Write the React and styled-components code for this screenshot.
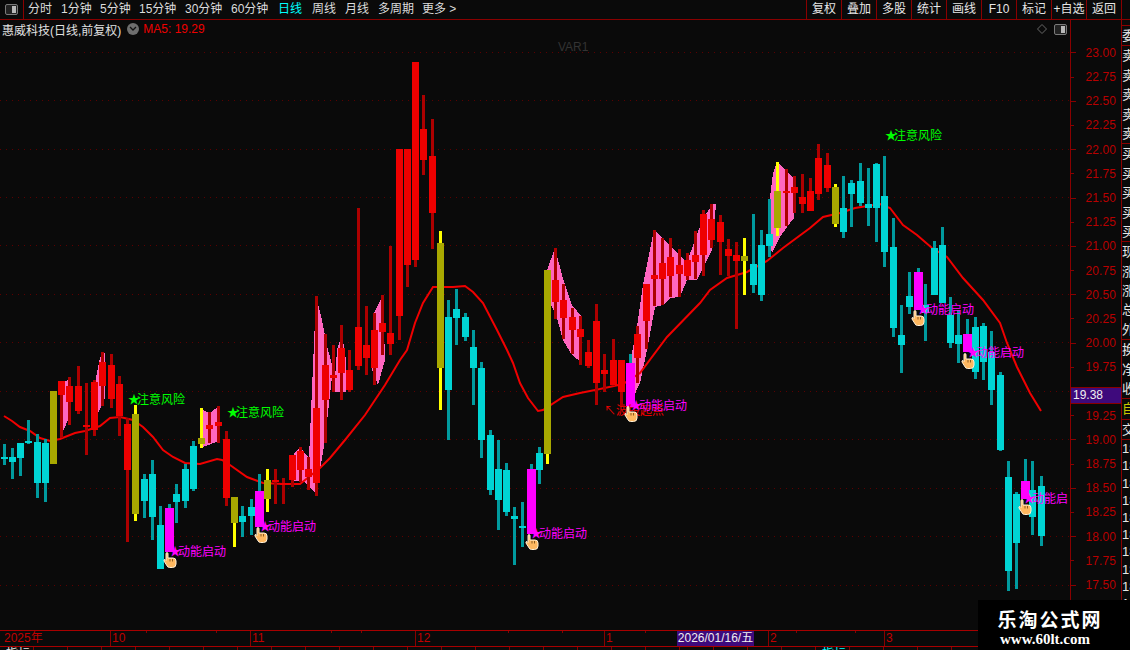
import React from "react";
import styled, { createGlobalStyle } from "styled-components";

const FONT = `"Liberation Sans", "Noto Sans CJK SC", sans-serif`;
const LINE = "#8a0000";

const GlobalStyle = createGlobalStyle`
  html, body { margin: 0; padding: 0; background: #0a0a0a; }
  * { box-sizing: border-box; }
`;

// chart data, in page pixels: [x, wickTop, wickBottom, bodyTop, bodyBottom, kind]
const CANDLES = [
  [4.5, 444, 465, 457, 459, "c"], [12.5, 448, 479, 457, 462, "c"], [20.5, 443, 476, 443, 458, "c"], [28.5, 420, 444, 441, 443, "c"],
  [37.5, 434, 498, 442, 483, "c"], [45.5, 439, 502, 443, 483, "c"], [53.5, 391, 464, 391, 464, "o"], [61.5, 381, 438, 381, 395, "r"],
  [69.5, 377, 425, 386, 402, "r"], [78.5, 366, 414, 386, 411, "r"], [86.5, 383, 455, 425, 427, "r"], [94.5, 380, 436, 382, 430, "r"],
  [102.5, 352, 406, 362, 386, "r"], [111, 354, 408, 365, 399, "r"], [119.5, 376, 436, 384, 416, "r"], [127.5, 418, 542, 424, 470, "r"],
  [135.5, 405, 521, 414, 514, "o"], [144.5, 474, 518, 479, 501, "c"], [152.5, 460, 540, 474, 517, "c"], [160.5, 506, 569, 525, 569, "c"],
  [169, 504, 552, 508, 552, "m"], [176.5, 484, 523, 494, 502, "c"], [185.5, 464, 508, 469, 501, "c"], [193.5, 441, 491, 446, 489, "c"],
  [201.5, 408, 448, 438, 444, "o"], [209.5, 412, 443, 425, 429, "r"], [218.5, 406, 443, 422, 426, "r"], [226.5, 431, 506, 439, 498, "r"],
  [234.5, 497, 547, 497, 523, "o"], [242.5, 506, 537, 516, 522, "c"], [251.5, 499, 535, 507, 516, "c"], [259.5, 474, 527, 491, 527, "m"],
  [267.5, 469, 512, 480, 499, "o"], [275.5, 469, 504, 480, 482, "r"], [283.5, 478, 504, 483, 485, "r"], [292.5, 455, 487, 455, 480, "r"],
  [300.5, 447, 482, 451, 470, "r"], [308.5, 457, 490, 469, 477, "r"], [316.5, 296, 496, 408, 483, "r"], [325.5, 334, 443, 365, 400, "r"],
  [333.5, 345, 392, 375, 378, "r"], [341.5, 325, 400, 348, 373, "r"], [349.5, 350, 392, 370, 390, "r"], [358.5, 208, 370, 327, 366, "r"],
  [366.5, 306, 375, 345, 358, "r"], [374.5, 313, 385, 330, 368, "r"], [382.5, 295, 355, 323, 332, "r"], [390.5, 246, 355, 333, 344, "r"],
  [399, 149, 340, 149, 316, "r"], [407.5, 149, 287, 149, 265, "r"], [415.5, 62, 267, 62, 260, "r"], [423.5, 95, 175, 129, 160, "r"],
  [432, 119, 249, 156, 213, "r"], [440.5, 231, 410, 243, 368, "o"], [448.5, 300, 440, 317, 390, "c"], [456.5, 289, 345, 309, 318, "c"],
  [465.5, 313, 341, 317, 337, "c"], [473.5, 330, 405, 347, 368, "c"], [481.5, 362, 458, 368, 440, "c"], [490, 430, 495, 435, 490, "c"],
  [498, 440, 530, 469, 500, "c"], [506.5, 463, 516, 470, 512, "c"], [514.5, 507, 565, 516, 519, "c"], [522.5, 502, 547, 526, 527, "c"],
  [531, 464, 534, 469, 534, "m"], [539.5, 447, 484, 453, 470, "c"], [547.5, 270, 464, 270, 454, "o"], [555.5, 248, 319, 280, 302, "r"],
  [563.5, 284, 339, 300, 318, "r"], [572, 308, 354, 317, 330, "r"], [580.5, 316, 365, 329, 337, "r"], [588.5, 340, 368, 352, 366, "r"],
  [596.5, 304, 405, 321, 383, "r"], [604.5, 354, 392, 370, 374, "r"], [613, 339, 386, 360, 385, "r"], [621.5, 360, 407, 360, 392, "r"],
  [630, 354, 407, 363, 407, "m"], [637.5, 326, 383, 334, 358, "r"], [646.5, 284, 349, 284, 321, "r"], [654.5, 230, 306, 275, 279, "r"],
  [662.5, 238, 305, 263, 279, "r"], [670.5, 238, 297, 257, 276, "r"], [679.5, 249, 297, 265, 274, "r"], [687.5, 253, 280, 260, 276, "r"],
  [695.5, 231, 279, 255, 262, "r"], [703.5, 210, 276, 214, 255, "r"], [711.5, 204, 248, 219, 240, "r"], [720.5, 215, 275, 222, 242, "r"],
  [728.5, 239, 276, 249, 256, "r"], [736.5, 242, 329, 255, 261, "r"], [744.5, 238, 295, 256, 261, "o"], [753.5, 214, 293, 264, 285, "c"],
  [761.5, 230, 301, 245, 295, "c"], [769.5, 199, 257, 234, 246, "c"], [777.5, 162, 236, 191, 228, "o"], [786.5, 169, 226, 191, 193, "r"],
  [794.5, 176, 213, 187, 193, "r"], [802.5, 174, 213, 197, 204, "r"], [810.5, 178, 211, 191, 211, "r"], [818.5, 144, 200, 158, 194, "r"],
  [827.5, 153, 192, 165, 188, "r"], [835.5, 184, 227, 187, 224, "o"], [843.5, 176, 238, 208, 232, "c"], [851.5, 180, 227, 183, 194, "c"],
  [860.5, 163, 206, 181, 203, "c"], [868.5, 168, 226, 204, 208, "c"], [876.5, 163, 242, 164, 208, "c"], [884.5, 156, 267, 196, 252, "c"],
  [893.5, 218, 337, 247, 328, "c"], [901.5, 305, 373, 335, 345, "c"], [909.5, 272, 314, 296, 307, "c"], [918, 268, 310, 272, 310, "m"],
  [925.5, 284, 341, 305, 313, "c"], [934.5, 241, 295, 248, 295, "c"], [942.5, 227, 303, 245, 303, "c"], [950.5, 297, 348, 315, 343, "c"],
  [958.5, 310, 363, 335, 344, "c"], [967.5, 319, 352, 334, 352, "m"], [975.5, 317, 379, 327, 372, "c"], [983.5, 323, 380, 326, 362, "c"],
  [991.5, 331, 405, 352, 390, "c"], [1000.5, 372, 451, 375, 450, "c"], [1008.5, 461, 591, 477, 571, "c"], [1016.5, 492, 589, 494, 543, "c"],
  [1025, 459, 499, 481, 499, "m"], [1032.5, 461, 535, 490, 517, "c"], [1041.5, 476, 546, 486, 536, "c"],
];

const COLORS = {
  r: { body: "#ee0000", wick: "#ad0000" },
  c: { body: "#00d4d4", wick: "#009a9e" },
  o: { body: "#a8a800", wick: "#ffff00" },
  m: { body: "#ff00ff", wick: "#009a9e" },
};

const MA_LINE = [
  [4, 416], [12, 421], [20, 427], [30, 431], [40, 438], [50, 441], [60, 439], [75, 433], [85, 431], [100, 426], [110, 418], [120, 417],
  [133, 420], [143, 427], [153, 437], [163, 450], [173, 457], [185, 463], [200, 464], [217, 459], [222, 460], [230, 465], [247, 477],
  [263, 483], [283, 484], [300, 484], [320, 468], [330, 458], [345, 440], [365, 415], [385, 385], [400, 360], [407, 350], [415, 323],
  [423, 303], [433, 287], [453, 287], [465, 286], [473, 292], [483, 303], [497, 330], [507, 350], [513, 363], [520, 383], [528, 398],
  [538, 411], [543, 410], [563, 397], [580, 393], [600, 389], [623, 384], [640, 373], [667, 337], [700, 303], [710, 290], [727, 278],
  [747, 272], [767, 261], [783, 248], [810, 228], [823, 217], [840, 213], [855, 208], [880, 204], [890, 208], [903, 225], [917, 235],
  [932, 248], [947, 257], [963, 278], [983, 300], [1000, 323], [1007, 343], [1017, 367], [1030, 393], [1041, 411],
];

const PINK_AREAS = [
  "60,438 62,384 70,378 72,400 68,420",
  "95,420 95,382 100,358 105,352 105,398",
  "203,447 203,410 210,413 219,406 219,441",
  "289,480 289,460 300,447 309,458 316,296 322,320 328,350 333,368 325,440 316,494 305,482",
  "334,392 337,350 342,335 346,360 346,392",
  "372,370 374,313 383,295 385,360 378,385",
  "547,270 555,248 562,275 572,305 582,317 582,363 572,355 563,340 557,318 549,300",
  "632,400 630,363 637,327 643,285 654,230 662,238 687,263 687,280 680,297 670,298 663,305 655,307 647,350 640,383",
  "687,262 703,218 713,204 716,204 712,250 697,280 687,280",
  "772,253 768,233 770,197 773,173 777,162 793,177 794,218 787,227 780,237",
];

const GRID_YS = [52, 100, 149, 197, 245, 294, 342, 391, 439, 488, 536, 585];

const WARNINGS = [[128, 404], [227, 417], [885, 140]];
const SIGNALS = [
  [169, 556, "动能启动"], [259, 531, "动能启动"], [530, 538, "动能启动"], [630, 410, "动能启动"],
  [917, 314, "动能启动"], [967, 357, "动能启动"], [1023, 503, "动能启"],
];
const HANDS = [[170, 560], [261, 535], [532, 542], [631, 414], [918, 318], [968, 361], [1025, 507]];

const PRICES = [
  "23.00", "22.75", "22.50", "22.25", "22.00", "21.75", "21.50", "21.25", "21.00", "20.75", "20.50", "20.25",
  "20.00", "19.75", "", "19.25", "19.00", "18.75", "18.50", "18.25", "18.00", "17.75", "17.50",
];

const LEFT_TABS = [
  ["分时", 33], ["1分钟", 39], ["5分钟", 39], ["15分钟", 46], ["30分钟", 46], ["60分钟", 47],
  ["日线", 34, true], ["周线", 33], ["月线", 33], ["多周期", 44], ["更多 >", 40],
];
const RIGHT_BUTTONS = ["复权", "叠加", "多股", "统计", "画线", "F10", "标记", "+自选", "返回"];

const SIDE_GROUPS = [
  { rows: ["委比"] },
  { rows: ["卖五", "卖四", "卖三", "卖二", "卖一"] },
  { rows: ["买一", "买二", "买三", "买四", "买五"] },
  { rows: ["现手", "涨跌", "涨幅", "总手", "外盘"] },
  { rows: ["换手", "净资", "收益"] },
  { rows: ["自"], accent: true },
  { rows: ["交"] },
];
const SIDE_NUMBERS = ["18.50", "18.49", "18.48", "18.47", "18.46", "18.45", "18.44", "18.43", "18.42", "18.41", "18.40"];

const MONTHS = [
  ["2025年", 110], ["10", 140], ["11", 165], ["12", 189], ["1", 73],
];
const MINOR_TICKS = [146, 216, 331, 361, 508, 562, 645, 796, 855];

const Page = styled.div`
  position: relative;
  width: 1130px;
  height: 650px;
  overflow: hidden;
  background: #0a0a0a;
  font-family: ${FONT};
  color: #e0e0e0;
`;

const Toolbar = styled.div`
  display: flex;
  align-items: center;
  height: 20px;
  border-bottom: 1px solid ${LINE};
`;

const PanelToggle = styled.div`
  display: flex;
  align-items: center;
  justify-content: center;
  width: 24px;
  height: 19px;
  border-right: 1px solid ${LINE};
  margin-right: 4px;
`;

const Tab = styled.div`
  width: ${(p) => p.$w}px;
  font-size: 12px;
  line-height: 19px;
  white-space: nowrap;
  color: ${(p) => (p.$active ? "#00ffff" : "#dcdcdc")};
`;

const ToolbarRight = styled.div`
  display: flex;
  margin-left: auto;
  margin-right: 8px;
  border-left: 1px solid ${LINE};
`;

const ToolButton = styled.div`
  width: 35px;
  height: 19px;
  border-right: 1px solid ${LINE};
  font-size: 12px;
  line-height: 19px;
  text-align: center;
  white-space: nowrap;
  color: #e6e6e6;
`;

const Main = styled.div`
  display: flex;
  height: 610px;
`;

const ChartPanel = styled.div`
  display: flex;
  flex-direction: column;
  width: 1070px;
`;

const InfoRow = styled.div`
  display: flex;
  align-items: center;
  height: 18px;
  padding: 0 3px 0 2px;
  font-size: 12px;
`;

const StockName = styled.span`
  color: #e0e0e0;
  white-space: nowrap;
`;

const MaValue = styled.span`
  margin-left: 4px;
  color: #ee0000;
  white-space: nowrap;
`;

const RoundButton = styled.span`
  display: flex;
  align-items: center;
  justify-content: center;
  width: 12px;
  height: 12px;
  margin-left: 6px;
  border-radius: 50%;
  background: #6e6e6e;
`;

const InfoTools = styled.div`
  display: flex;
  align-items: center;
  gap: 7px;
  margin-left: auto;
`;

const Plot = styled.svg`
  display: block;
  width: 1070px;
  height: 592px;
`;

const ChartText = styled.text`
  font-family: ${FONT};
  font-size: 12px;
  fill: ${(p) => p.$color};
`;

const Star = styled.tspan`
  letter-spacing: -3px;
`;

const PriceAxis = styled.div`
  width: 52px;
  padding-top: 20.8px;
  border-left: 1px solid ${LINE};
  border-right: 1px solid ${LINE};
`;

const PriceRow = styled.div`
  display: flex;
  align-items: center;
  justify-content: space-between;
  height: 24.2px;
  padding-right: 5px;
`;

const PriceTick = styled.span`
  width: ${(p) => (p.$major ? 5 : 3)}px;
  height: 1px;
  background: ${LINE};
`;

const PriceText = styled.span`
  font-size: 12px;
  letter-spacing: 0.1px;
  color: #b80000;
`;

const PriceTag = styled.div`
  position: absolute;
  left: 1070px;
  top: 387px;
  width: 52px;
  height: 17px;
  padding-left: 2px;
  background: #3e0a7c;
  border: 1px solid ${LINE};
  font-size: 12px;
  line-height: 15px;
  color: #f0f0f0;
`;

const SideStrip = styled.div`
  width: 8px;
  padding-top: 5px;
  overflow: hidden;
  white-space: nowrap;
`;

const SideGroup = styled.div`
  border-top: 1px solid ${LINE};
  font-size: 13px;
  color: ${(p) => (p.$accent ? "#c8c800" : "#e6e6e6")};
`;

const SideCell = styled.div`
  height: ${(p) => p.$h}px;
  line-height: ${(p) => p.$h}px;
`;

const DateAxis = styled.div`
  position: relative;
  display: flex;
  height: 17px;
  border-top: 1px solid #a80000;
  border-bottom: 1px solid #a80000;
`;

const MonthCell = styled.div`
  width: ${(p) => p.$w}px;
  margin-left: ${(p) => p.$gap || 0}px;
  padding-left: ${(p) => (p.$first ? 4 : 1)}px;
  border-left: ${(p) => (p.$first ? "none" : `1px solid ${LINE}`)};
  font-size: 12px;
  line-height: 15px;
  color: #c00000;
`;

const DateTag = styled.div`
  width: 77px;
  background: #3e0a7c;
  font-size: 12px;
  line-height: 15px;
  text-align: center;
  white-space: nowrap;
  color: #f0f0f0;
`;

const MinorTicks = styled.svg`
  position: absolute;
  left: 0;
  top: 0;
  width: 1000px;
  height: 3px;
`;

const TabStrip = styled.div`
  display: flex;
  height: 3px;
  overflow: hidden;
`;

const StripCell = styled.div`
  flex: none;
  width: 34px;
  padding-left: 6px;
  border-right: 1px solid ${LINE};
  font-size: 12px;
  line-height: 14px;
  color: ${(p) => (p.$active ? "#00ffff" : "#e6e6e6")};
`;

const Watermark = styled.div`
  position: absolute;
  left: 978px;
  top: 600px;
  display: flex;
  flex-direction: column;
  align-items: center;
  width: 152px;
  height: 50px;
  padding: 7px 8px 0 0;
  background: #000;
  color: #fff;
`;

const WatermarkTitle = styled.div`
  font-family: "Noto Sans CJK SC", sans-serif;
  font-size: 19px;
  font-weight: 700;
  line-height: 24px;
  letter-spacing: 2px;
  white-space: nowrap;
`;

const WatermarkUrl = styled.div`
  margin-right: 10px;
  font-family: "Liberation Serif", serif;
  font-size: 15px;
  font-weight: 700;
  line-height: 17px;
  white-space: nowrap;
`;

function PanelIcon() {
  return (
    <svg width="13" height="11" viewBox="0 0 13 11">
      <rect x="0.5" y="0.5" width="12" height="10" rx="1.5" fill="#222" stroke="#7a7a7a" />
      <rect x="7" y="2" width="4" height="7" fill="#b8b8b8" />
    </svg>
  );
}

function Candle({ data }) {
  const [x, wickTop, wickBottom, bodyTop, bodyBottom, kind] = data;
  const color = COLORS[kind];
  const bodyWidth = kind === "m" ? 9 : 7;
  return (
    <g>
      <rect x={Math.round(x - 1.5)} y={wickTop} width="3" height={wickBottom - wickTop} fill={color.wick} />
      <rect x={Math.round(x - bodyWidth / 2)} y={bodyTop} width={bodyWidth} height={Math.max(bodyBottom - bodyTop, 2)} fill={color.body} />
    </g>
  );
}

function Hand({ x, y }) {
  return (
    <g transform={`translate(${x - 7} ${y - 8})`}>
      <path
        d="M3 1.2 Q4 0 5 1.2 V6 H10 Q13 6 13 9 V12 Q13 15.5 9.5 15.5 H6.5 Q4.5 15.5 3.5 13 L1 9 Q0.5 7.5 2 7.5 L3 8.5 Z"
        fill="#ffb860"
        stroke="#fff0d8"
        strokeWidth="1"
      />
      <path d="M7 7 V9.5 M9.5 7 V9.5" stroke="#8a5a20" strokeWidth="1" fill="none" />
    </g>
  );
}

function PriceChart() {
  return (
    <Plot viewBox="0 38 1070 592">
      <g shapeRendering="crispEdges">
        {GRID_YS.map((y) => (
          <line key={y} x1="0" x2="1070" y1={y + 0.5} y2={y + 0.5} stroke="#5c0000" strokeDasharray="1 5" />
        ))}
        {PINK_AREAS.map((points) => (
          <polygon key={points} points={points} fill="#ff66c0" />
        ))}
      </g>
      <polyline points={MA_LINE.map((p) => p.join(",")).join(" ")} fill="none" stroke="#f00000" strokeWidth="2" />
      <g shapeRendering="crispEdges">
        {CANDLES.map((c) => (
          <Candle key={c[0]} data={c} />
        ))}
      </g>
      <ChartText x="558" y="51" $color="#333">VAR1</ChartText>
      {WARNINGS.map(([x, y]) => (
        <ChartText key={x} x={x} y={y} $color="#00ff00"><Star>★</Star>注意风险</ChartText>
      ))}
      <ChartText x="604" y="415" $color="#ee0000">↖波段起点</ChartText>
      {SIGNALS.map(([x, y, label]) => (
        <ChartText key={x} x={x} y={y} $color="#ff00ff"><Star>★</Star>{label}</ChartText>
      ))}
      {HANDS.map(([x, y]) => (
        <Hand key={x} x={x} y={y} />
      ))}
    </Plot>
  );
}

export default function App() {
  return (
    <Page>
      <GlobalStyle />
      <Toolbar>
        <PanelToggle>
          <PanelIcon />
        </PanelToggle>
        {LEFT_TABS.map(([label, w, active]) => (
          <Tab key={label} $w={w} $active={active}>{label}</Tab>
        ))}
        <ToolbarRight>
          {RIGHT_BUTTONS.map((label) => (
            <ToolButton key={label}>{label}</ToolButton>
          ))}
        </ToolbarRight>
      </Toolbar>

      <Main>
        <ChartPanel>
          <InfoRow>
            <StockName>惠威科技(日线,前复权)</StockName>
            <RoundButton>
              <svg width="8" height="6" viewBox="0 0 8 6">
                <path d="M1 1 L4 4 L7 1" fill="none" stroke="#111" strokeWidth="1.3" />
              </svg>
            </RoundButton>
            <MaValue>MA5: 19.29</MaValue>
            <InfoTools>
              <svg width="10" height="10" viewBox="0 0 10 10">
                <path d="M5 0.5 L9.5 5 L5 9.5 L0.5 5 Z" fill="none" stroke="#666" />
              </svg>
              <PanelIcon />
            </InfoTools>
          </InfoRow>
          <PriceChart />
        </ChartPanel>

        <PriceAxis>
          {PRICES.map((price, i) => (
            <PriceRow key={i}>
              <PriceTick $major={i % 2 === 0} />
              <PriceText>{price}</PriceText>
            </PriceRow>
          ))}
        </PriceAxis>

        <SideStrip>
          {SIDE_GROUPS.map((group) => (
            <SideGroup key={group.rows[0]} $accent={group.accent}>
              {group.rows.map((row) => (
                <SideCell key={row} $h={19.4}>{row}</SideCell>
              ))}
            </SideGroup>
          ))}
          <SideGroup>
            {SIDE_NUMBERS.map((n) => (
              <SideCell key={n} $h={17.2}>{n}</SideCell>
            ))}
          </SideGroup>
        </SideStrip>
      </Main>

      <DateAxis>
        <MinorTicks viewBox="0 0 1000 3">
          {MINOR_TICKS.map((x) => (
            <rect key={x} x={x} y="0" width="1" height="2" fill={LINE} />
          ))}
        </MinorTicks>
        {MONTHS.map(([label, w], i) => (
          <MonthCell key={label} $w={w} $first={i === 0}>{label}</MonthCell>
        ))}
        <DateTag>2026/01/16/五</DateTag>
        <MonthCell $gap={14} $w={116}>2</MonthCell>
        <MonthCell $w={90}>3</MonthCell>
      </DateAxis>

      <TabStrip>
        {Array.from({ length: 34 }, (_, i) => (
          <StripCell key={i} $active={i === 24}>{i === 0 || i === 24 ? "指标" : ""}</StripCell>
        ))}
      </TabStrip>

      <PriceTag>19.38</PriceTag>

      <Watermark>
        <WatermarkTitle>乐淘公式网</WatermarkTitle>
        <WatermarkUrl>www.60lt.com</WatermarkUrl>
      </Watermark>
    </Page>
  );
}
